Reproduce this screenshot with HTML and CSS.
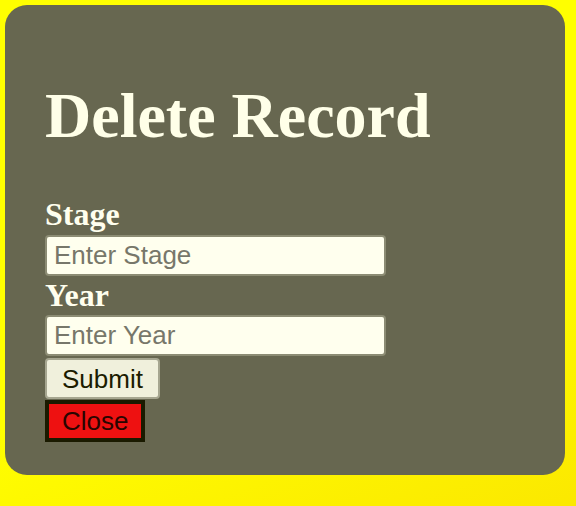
FILE: index.html
```html
<!DOCTYPE html>
<html>
<head>
<meta charset="utf-8">
<link rel="stylesheet" href="styles.css">
</head>
<body>
<div class="panel">
  <h1 class="title">Delete Record</h1>
  <form class="form">
    <label class="label" for="stage">Stage</label>
    <input class="field" id="stage" type="text" placeholder="Enter Stage">
    <label class="label label-year" for="year">Year</label>
    <input class="field" id="year" type="text" placeholder="Enter Year">
    <button class="btn submit" type="button">Submit</button>
    <button class="btn close" type="button">Close</button>
  </form>
</div>
</body>
</html>
```
FILE: styles.css
```css
html, body {
  margin: 0;
  padding: 0;
}
body {
  width: 576px;
  height: 506px;
  overflow: hidden;
  background: linear-gradient(160deg, #ffff00 0%, #ffff00 60%, #fbe800 100%);
  padding: 5px;
  box-sizing: border-box;
}
.panel {
  width: 560px;
  height: 470px;
  box-sizing: border-box;
  background: #676750;
  border-radius: 22px;
  padding: 30px 40px 0 40px;
}
.title {
  margin: 44px 0 43px 0;
  font-family: "Liberation Serif", "Times New Roman", serif;
  font-weight: bold;
  font-size: 64px;
  line-height: 74px;
  color: #ffffe8;
}
.form {
  display: flex;
  flex-direction: column;
  align-items: flex-start;
}
.label {
  font-family: "Liberation Serif", "Times New Roman", serif;
  font-weight: bold;
  font-size: 32px;
  line-height: 36px;
  color: #ffffee;
  margin-bottom: 3px;
}
.label-year {
  margin-top: 1px;
  margin-bottom: 2px;
}
.field {
  box-sizing: border-box;
  width: 341px;
  height: 41px;
  margin: 0;
  padding: 0 7px;
  font-family: "Liberation Sans", Arial, sans-serif;
  font-size: 26px;
  background: #ffffee;
  border: 2px solid #8c8c74;
  border-radius: 4px;
  color: #333;
}
.field::placeholder {
  color: #77776a;
}
.btn {
  box-sizing: border-box;
  margin: 0;
  font-family: "Liberation Sans", Arial, sans-serif;
  font-size: 26px;
  color: #1c1c00;
  line-height: 1;
}
.submit {
  margin-top: 2px;
  height: 41px;
  padding: 0 15px;
  background: #f0f0dc;
  border: 2px solid #a6a690;
  border-radius: 4px;
}
.close {
  margin-top: 1px;
  height: 42px;
  padding: 0 13px;
  background: #ee1111;
  border: 4px solid #1a1a00;
  border-radius: 0;
  color: #2a0500;
}
```
